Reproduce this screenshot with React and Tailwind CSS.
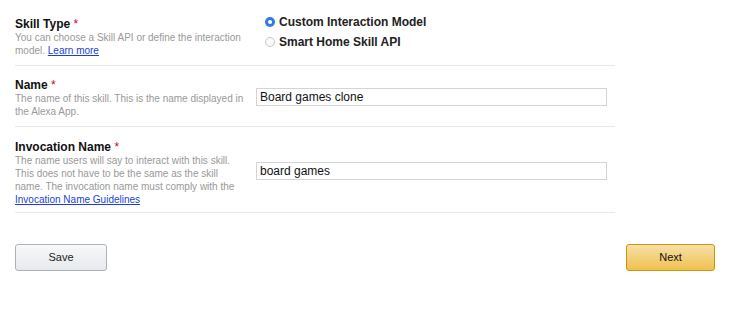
import React, { useState } from "react";

const font = { fontFamily: '"Liberation Sans", Arial, sans-serif' };

function Label({ title, children }) {
  return (
    <div className="w-[241px] shrink-0">
      <div className="text-[12px] leading-[14px] font-bold text-[#111]">
        {title} <span className="text-[#d0021b] font-normal">*</span>
      </div>
      <div className="w-[229px] text-[10px] leading-[13px] text-[#999]">{children}</div>
    </div>
  );
}

function Radio({ checked, label, onClick }) {
  return (
    <label className="flex items-center gap-[4px] cursor-pointer" onClick={onClick}>
      {checked ? (
        <span className="w-[10px] h-[10px] rounded-full bg-[#2f7ae5] flex items-center justify-center">
          <span className="w-[4px] h-[4px] rounded-full bg-white" />
        </span>
      ) : (
        <span className="w-[10px] h-[10px] rounded-full border border-[#c8c8c8] bg-[#fafafa]" />
      )}
      <span className="text-[12px] leading-[14px] font-bold text-[#222]">{label}</span>
    </label>
  );
}

export default function App() {
  const [type, setType] = useState("custom");
  const [name, setName] = useState("Board games clone");
  const [invocation, setInvocation] = useState("board games");

  return (
    <div className="w-[740px] h-[309px] bg-white px-[15px]" style={font}>
      <div className="w-[600px]">
        <div className="flex pt-[17px] pb-[8px] border-b border-[#e8e8e8]">
          <Label title="Skill Type">
            You can choose a Skill API or define the interaction model.{" "}
            <a href="#" className="text-[#1a3fd6] underline">Learn more</a>
          </Label>
          <div className="flex flex-col gap-[6px] -mt-[2px] pl-[9px]">
            <Radio checked={type === "custom"} label="Custom Interaction Model" onClick={() => setType("custom")} />
            <Radio checked={type === "smart"} label="Smart Home Skill API" onClick={() => setType("smart")} />
          </div>
        </div>

        <div className="flex pt-[12px] pb-[8px] border-b border-[#e8e8e8]">
          <Label title="Name">
            The name of this skill. This is the name displayed in the Alexa App.
          </Label>
          <div className="pt-[10px]">
            <input
              value={name}
              onChange={(e) => setName(e.target.value)}
              className="block w-[351px] h-[18px] border border-[#d4d4d4] px-[3px] text-[12px] text-[#111] outline-none"
              style={font}
            />
          </div>
        </div>

        <div className="flex pt-[13px] pb-[6px] border-b border-[#e8e8e8]">
          <Label title="Invocation Name">
            The name users will say to interact with this skill. This does not have to be the same as the skill
            name. The invocation name must comply with the{" "}
            <a href="#" className="text-[#1a3fd6] underline">Invocation Name Guidelines</a>
          </Label>
          <div className="pt-[22px]">
            <input
              value={invocation}
              onChange={(e) => setInvocation(e.target.value)}
              className="block w-[351px] h-[18px] border border-[#d4d4d4] px-[3px] text-[12px] text-[#111] outline-none"
              style={font}
            />
          </div>
        </div>
      </div>

      <div className="w-[700px] flex justify-between mt-[31px]">
        <button
          className="w-[92px] h-[27px] rounded-[3px] border border-[#adb1b8] bg-gradient-to-b from-[#f7f8fa] to-[#e7e9ec] text-[11px] text-[#222] shadow-[inset_0_1px_0_rgba(255,255,255,0.6)]"
          style={font}
        >
          Save
        </button>
        <button
          className="w-[89px] h-[27px] rounded-[3px] border border-[#c89411] bg-gradient-to-b from-[#f7dfa5] to-[#f0c14b] text-[11px] text-[#111]"
          style={font}
        >
          Next
        </button>
      </div>
    </div>
  );
}
